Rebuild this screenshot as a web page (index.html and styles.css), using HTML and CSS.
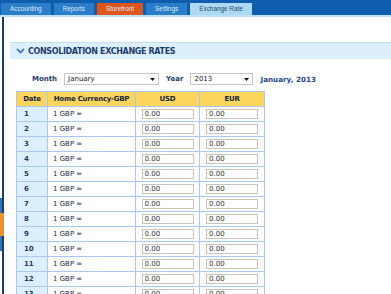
FILE: index.html
```html
<!DOCTYPE html>
<html lang="en">
<head>
    <meta charset="UTF-8">
    <meta name="viewport" content="width=device-width, initial-scale=1.0">
    <title>Exchange Rate</title>
    <link rel="stylesheet" href="styles.css">
</head>
<body>
    <div class="topbar">
        <div class="tab">Accounting</div>
        <div class="tab">Reports</div>
        <div class="tab orange">Storefront</div>
        <div class="tab">Settings</div>
        <div class="tab active">Exchange Rate</div>
    </div>
    <div class="stripe"></div>

    <div class="side-handle">
        <span class="handle-blue"></span>
        <span class="handle-orange"></span>
        <span class="handle-blue"></span>
    </div>

    <div class="main">
        <div class="section-head">
            <svg class="chevron" width="9" height="6" viewBox="0 0 9 6">
                <polyline points="1,1 4.5,4.5 8,1" fill="none" stroke="#4a7db6" stroke-width="1.8"/>
            </svg>
            <span>CONSOLIDATION EXCHANGE RATES</span>
        </div>

        <div class="period">
            <label class="period-label">Month</label>
            <div class="select month-select">
                <span>January</span>
                <svg width="5" height="3" viewBox="0 0 5 3"><polygon points="0,0 5,0 2.5,3" fill="#111"/></svg>
            </div>
            <label class="period-label">Year</label>
            <div class="select year-select">
                <span>2013</span>
                <svg width="5" height="3" viewBox="0 0 5 3"><polygon points="0,0 5,0 2.5,3" fill="#111"/></svg>
            </div>
            <span class="period-title">January, 2013</span>
        </div>

        <table class="rates">
            <thead>
                <tr>
                    <th class="col-date">Date</th>
                    <th class="col-home">Home Currency-GBP</th>
                    <th class="col-usd">USD</th>
                    <th class="col-eur">EUR</th>
                </tr>
            </thead>
            <tbody id="rateRows"></tbody>
        </table>
    </div>

    <script>
        // one row per day of the month
        const rateRows = document.getElementById("rateRows");
        let rows = "";
        for (let day = 1; day <= 31; day++) {
            rows += `<tr>
                <td class="date">${day}</td>
                <td class="home">1 GBP =</td>
                <td><input type="text" class="rate" value="0.00"></td>
                <td><input type="text" class="rate" value="0.00"></td>
            </tr>`;
        }
        rateRows.innerHTML = rows;
    </script>
</body>
</html>
```

FILE: styles.css
```css
body {
    margin: 0;
    font-family: "DejaVu Sans", sans-serif;
    background-color: #ffffff;
    overflow: hidden;
}
.topbar {
    height: 15px;
    box-sizing: border-box;
    padding: 3px 0 0 1px;
    display: flex;
    gap: 3px;
    background-color: #0f5dac;
}
.tab {
    padding: 0 9px;
    height: 12px;
    line-height: 12px;
    font-family: "Liberation Sans", sans-serif;
    font-size: 6.4px;
    color: #dde9f6;
    background-color: #2a7dc9;
}
.tab.orange {
    background-color: #df561c;
}
.tab.active {
    background-color: #acd9f5;
    color: #2a4a72;
}
.stripe {
    height: 2px;
    background-color: #bfe1f6;
}
.side-handle {
    position: absolute;
    left: 0;
    top: 198px;
    display: flex;
    flex-direction: column;
}
.handle-blue {
    width: 2px;
    height: 15px;
    background-color: #2f78bd;
}
.handle-orange {
    width: 4px;
    height: 23px;
    background-color: #f0922c;
}
.main {
    margin-left: 2px;
    border-left: 2px solid #1d3c6e;
    min-height: 300px;
    padding-top: 25px;
}
.section-head {
    margin-left: 6px;
    height: 16px;
    border-top: 1px solid #c4dff2;
    background-color: #ddeffc;
    display: flex;
    align-items: center;
    gap: 3px;
    padding-left: 6px;
    font-size: 8px;
    font-weight: bold;
    letter-spacing: -0.35px;
    color: #1d3e6c;
}
.period {
    margin-top: 14px;
    padding-left: 28px;
    height: 12px;
    display: flex;
    align-items: center;
    gap: 7px;
}
.period-label {
    font-size: 7px;
    font-weight: bold;
    color: #1d3e6c;
}
.select {
    height: 12px;
    box-sizing: border-box;
    border: 1px solid #c6c6c6;
    display: flex;
    align-items: center;
    justify-content: space-between;
    padding: 0 3px 0 3px;
    font-size: 7px;
    color: #222222;
}
.month-select {
    width: 95px;
}
.year-select {
    width: 63px;
}
.period-title {
    font-size: 7.2px;
    font-weight: bold;
    color: #1d4a8a;
}
.rates {
    margin: 6px 0 0 12px;
    border-collapse: collapse;
    table-layout: fixed;
    width: 244px;
}
.rates th, .rates td {
    border: 1px solid #a9c9ed;
    height: 14px;
    padding: 0;
    font-size: 7px;
}
.rates th {
    background-color: #fdd45c;
    color: #1a2744;
    font-weight: bold;
    letter-spacing: -0.25px;
    text-align: center;
}
.col-date { width: 30px; }
.col-home { width: 87px; }
.col-usd { width: 63px; }
.col-eur { width: 64px; }
.rates td.date {
    background-color: #ddeefc;
    color: #1d3e6c;
    font-weight: bold;
    padding-left: 7px;
}
.rates td.home {
    color: #1e2a44;
    padding-left: 5px;
}
.rate {
    display: block;
    margin: 0 auto;
    width: 52px;
    height: 10px;
    box-sizing: border-box;
    border: 1px solid #c8c4ba;
    padding: 0 2px;
    font-family: "DejaVu Sans", sans-serif;
    font-size: 7px;
    color: #333333;
}
```
